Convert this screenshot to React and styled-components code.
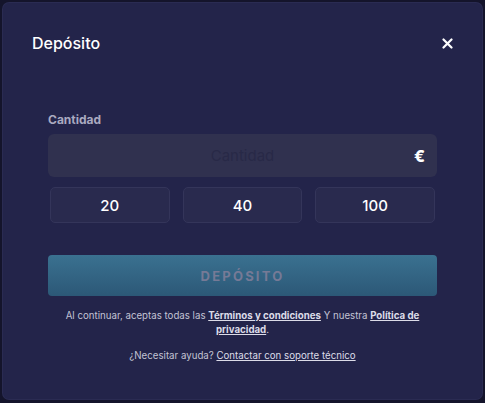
import React, { useState } from 'react';
import styled, { createGlobalStyle } from 'styled-components';

const GlobalStyle = createGlobalStyle`
  html, body {
    margin: 0;
    padding: 0;
    background: #14142b;
    font-family: Inter, "Noto Sans", sans-serif;
  }
`;

const Backdrop = styled.div`
  width: 485px;
  height: 403px;
  padding: 3px;
  box-sizing: border-box;
`;

const Modal = styled.div`
  height: 396px;
  background: #23244a;
  border-radius: 6px;
  box-shadow: 0 0 0 1px #2a2b52;
  display: flex;
  flex-direction: column;
`;

const Header = styled.div`
  display: flex;
  align-items: center;
  justify-content: space-between;
  padding: 30px 28px 0 29px;
  height: 20px;
`;

const Title = styled.h2`
  margin: 0;
  color: #ffffff;
  font-size: 16px;
  font-weight: 500;
`;

const CloseButton = styled.button`
  background: none;
  border: none;
  padding: 0;
  width: 14px;
  height: 14px;
  display: flex;
  align-items: center;
  justify-content: center;
  cursor: pointer;
`;

const Body = styled.div`
  padding: 59px 45px 0;
  display: flex;
  flex-direction: column;
`;

const Label = styled.label`
  color: #aaaac0;
  font-size: 12px;
  font-weight: 700;
  margin-bottom: 7px;
`;

const InputWrap = styled.div`
  position: relative;
  height: 43px;
`;

const Input = styled.input`
  width: 100%;
  height: 100%;
  box-sizing: border-box;
  background: #30314f;
  border: none;
  border-radius: 6px;
  text-align: center;
  font-family: inherit;
  font-size: 15px;
  color: #ffffff;
  outline: none;
  &::placeholder {
    color: #282947;
  }
`;

const Currency = styled.span`
  position: absolute;
  right: 12px;
  top: 50%;
  transform: translateY(-50%);
  color: #ffffff;
  font-weight: 800;
  font-size: 16px;
`;

const Presets = styled.div`
  display: grid;
  grid-template-columns: repeat(3, 1fr);
  gap: 13px;
  padding: 0 2px;
  margin-top: 10px;
`;

const Preset = styled.button`
  height: 36px;
  background: ${p => (p.$active ? '#33345c' : '#292a4e')};
  border: 1px solid #34355a;
  border-radius: 5px;
  color: #ffffff;
  font-family: inherit;
  font-size: 15px;
  font-weight: 500;
  cursor: pointer;
`;

const Submit = styled.button`
  margin-top: 32px;
  height: 41px;
  border: none;
  border-radius: 4px;
  background: linear-gradient(180deg, #3a7190 0%, #2c5877 100%);
  color: #767a96;
  font-family: inherit;
  font-size: 13px;
  font-weight: 700;
  letter-spacing: 2.2px;
  cursor: not-allowed;
`;

const Note = styled.p`
  margin: ${p => p.$gap}px 0 0;
  text-align: center;
  color: #c2c3d4;
  font-size: 9.7px;
  line-height: 14px;
`;

const Link = styled.a`
  color: #dcdce8;
  font-weight: ${p => (p.$bold ? 700 : 400)};
  text-decoration: underline;
  cursor: pointer;
`;

const App = () => {
  const [amount, setAmount] = useState('');

  return (
    <>
      <GlobalStyle />
      <Backdrop>
        <Modal>
          <Header>
            <Title>Depósito</Title>
            <CloseButton aria-label="Cerrar">
              <svg width="11" height="11" viewBox="0 0 11 11">
                <path d="M1.5 1.5L9.5 9.5M9.5 1.5L1.5 9.5" stroke="#fff" strokeWidth="2.2" strokeLinecap="round" />
              </svg>
            </CloseButton>
          </Header>
          <Body>
            <Label>Cantidad</Label>
            <InputWrap>
              <Input
                placeholder="Cantidad"
                value={amount}
                onChange={e => setAmount(e.target.value)}
              />
              <Currency>€</Currency>
            </InputWrap>
            <Presets>
              {[20, 40, 100].map(v => (
                <Preset key={v} $active={amount === String(v)} onClick={() => setAmount(String(v))}>
                  {v}
                </Preset>
              ))}
            </Presets>
            <Submit disabled={!amount}>DEPÓSITO</Submit>
            <Note $gap={13}>
              Al continuar, aceptas todas las <Link $bold>Términos y condiciones</Link> Y nuestra{' '}
              <Link $bold>Política de privacidad</Link>.
            </Note>
            <Note $gap={12}>
              ¿Necesitar ayuda? <Link>Contactar con soporte técnico</Link>
            </Note>
          </Body>
        </Modal>
      </Backdrop>
    </>
  );
};

export default App;
